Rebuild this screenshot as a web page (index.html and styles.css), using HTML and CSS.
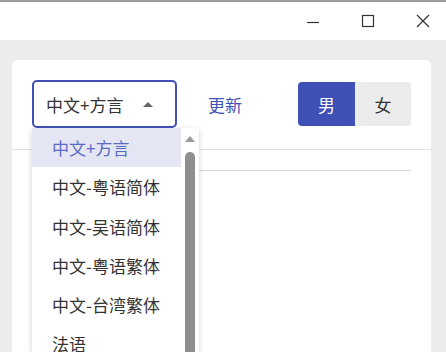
FILE: index.html
```html
<!DOCTYPE html>
<html lang="zh-CN">
<head>
    <meta charset="UTF-8">
    <title>语音合成</title>
    <link rel="stylesheet" href="styles.css">
</head>
<body>
    <!-- 窗口标题栏 -->
    <div class="titlebar">
        <span class="win_btn">
            <svg width="14" height="14" viewBox="0 0 14 14"><path d="M1 8.5h12" stroke="#333" stroke-width="1.2"/></svg>
        </span>
        <span class="win_btn">
            <svg width="14" height="14" viewBox="0 0 14 14"><rect x="1.5" y="1.5" width="11" height="11" fill="none" stroke="#333" stroke-width="1.2"/></svg>
        </span>
        <span class="win_btn">
            <svg width="14" height="14" viewBox="0 0 14 14"><path d="M1 1L13 13M13 1L1 13" stroke="#333" stroke-width="1.2"/></svg>
        </span>
    </div>

    <div class="main">
        <div class="card">
            <div class="toolbar">
                <div class="select">
                    <span>中文+方言</span>
                    <span class="arrow"></span>
                </div>
                <a class="link">更新</a>
                <div class="toggle">
                    <span class="tg_btn on">男</span>
                    <span class="tg_btn">女</span>
                </div>
            </div>
            <div class="divider"></div>
            <div class="textbox"></div>

            <!-- 下拉菜单 -->
            <div class="dropdown">
                <ul class="options">
                    <li class="active">中文+方言</li>
                    <li>中文-粤语简体</li>
                    <li>中文-吴语简体</li>
                    <li>中文-粤语繁体</li>
                    <li>中文-台湾繁体</li>
                    <li>法语</li>
                </ul>
                <div class="scrollbar">
                    <span class="sb_up"></span>
                    <span class="sb_thumb"></span>
                </div>
            </div>
        </div>
    </div>
</body>
</html>
```

FILE: styles.css
```css
*{ box-sizing: border-box; }
html, body{ height: 100%; }
body{
    margin: 0; overflow: hidden;
    background-color: #ececec;
    font-family: "Noto Sans CJK SC", "Noto Sans", sans-serif;
    color: #333;
}
.titlebar{ /* 窗口标题栏 */
    height: 40px; background-color: #fff;
    border-top: 2px solid #9c9c9c;
    display: flex; justify-content: flex-end; align-items: center;
    padding-right: 16px; gap: 41px;
}
.win_btn{ width: 14px; height: 14px; display: flex; }
.main{ padding: 20px 15px 0 12px; height: calc(100% - 40px); }
.card{
    position: relative; overflow: hidden;
    background-color: #fff; border-radius: 5px 5px 0 0;
    height: 100%;
}
.toolbar{
    display: flex; align-items: center;
    padding: 20px 20px 0 20px;
}
.select{
    width: 145px; height: 48px;
    border: 2px solid #3f51b5; border-radius: 5px;
    display: flex; align-items: center; justify-content: space-between;
    padding: 0 22px 0 12px;
    font-size: 17px;
}
.arrow{
    width: 0; height: 0;
    border-left: 5px solid transparent; border-right: 5px solid transparent;
    border-bottom: 5px solid #666;
}
.link{ color: #3f51b5; font-size: 17px; margin-left: 31px; }
.toggle{
    margin-left: auto; display: flex;
    height: 44px; border-radius: 4px; overflow: hidden;
}
.tg_btn{
    width: 56px; display: flex; align-items: center; justify-content: center;
    background-color: #ececec; font-size: 17px; color: #333;
}
.tg_btn.on{ background-color: #3f51b5; color: #fff; width: 57px; }
.divider{ height: 1px; background-color: #e2e2e2; margin-top: 21px; }
.textbox{
    margin: 20px 20px 0 20px; height: 120px;
    border-top: 1px solid #d6d6d6;
}
.dropdown{ /* 下拉菜单 */
    position: absolute; left: 20px; top: 68px; bottom: 0;
    width: 167px; overflow: hidden;
    background-color: #fff;
    box-shadow: 0 2px 6px rgba(0,0,0,0.18);
    display: flex;
}
.options{ list-style: none; margin: 0; padding: 0; width: 149px; }
.options li{
    height: 39.3px; line-height: 39.3px;
    padding-left: 20px; font-size: 17px; color: #333;
}
.options li.active{ background-color: #e4e6f3; color: #5b6bc5; }
.scrollbar{ position: relative; flex: 1; }
.sb_up{
    position: absolute; left: 4px; top: 8px; width: 0; height: 0;
    border-left: 5px solid transparent; border-right: 5px solid transparent;
    border-bottom: 6px solid #9a9a9a;
}
.sb_thumb{
    position: absolute; left: 4px; top: 24px; bottom: -10px; width: 10px;
    background-color: #8f8f8f; border-radius: 5px;
}
```
